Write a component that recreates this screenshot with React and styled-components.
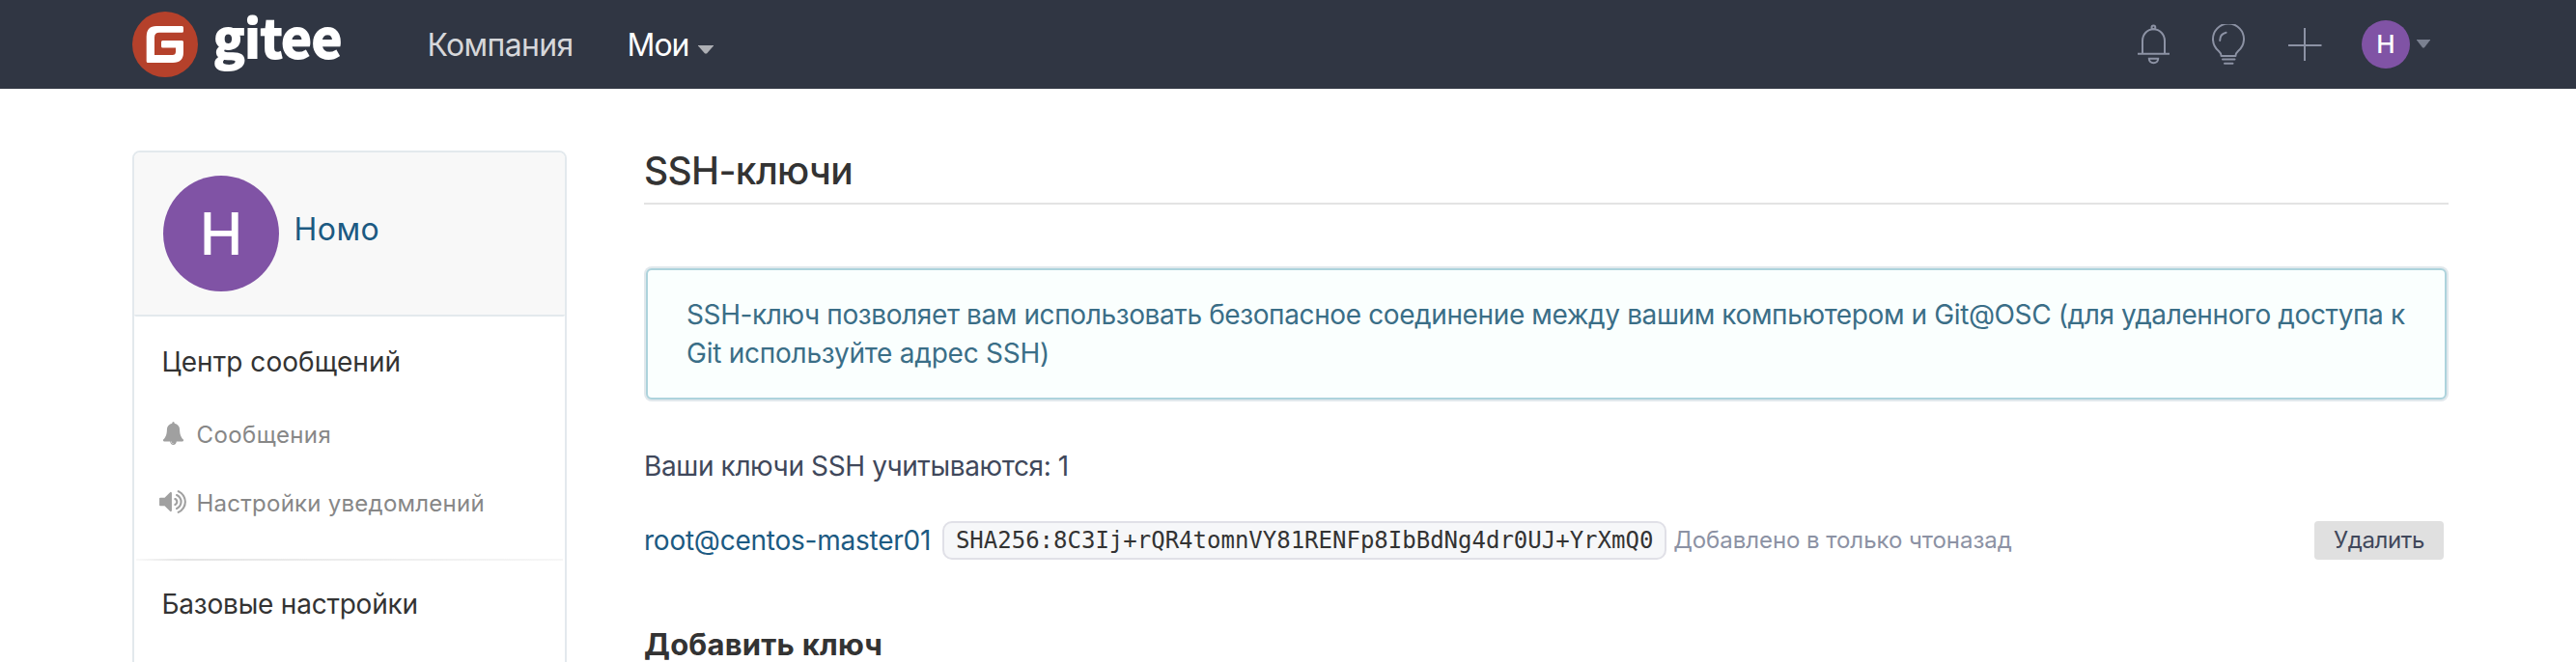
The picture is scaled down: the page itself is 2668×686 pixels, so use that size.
import React from "react";
import styled, { createGlobalStyle } from "styled-components";

const GlobalStyle = createGlobalStyle`
  * { box-sizing: border-box; }
  body {
    margin: 0;
    background: #fff;
    color: #40485b;
    font: 400 28px/40px Inter, "Liberation Sans", sans-serif;
    white-space: nowrap;
  }
  a { text-decoration: none; }
`;

const Page = styled.div`
  height: 686px;
  overflow: hidden;
`;

/* Top bar */

const Header = styled.header`
  display: flex;
  align-items: center;
  height: 92px;
  padding: 0 151px 0 137px;
  background: #303643;
`;

const Wordmark = styled.span`
  align-self: flex-start;
  width: 132px;
  margin: 0 89.5px 0 16px;
  font: 700 54px/73px "Noto Sans CJK SC", "Noto Sans", sans-serif;
  color: #fff;
  -webkit-text-stroke: 2px #fff;
  paint-order: stroke fill;
`;

const Nav = styled.nav`
  display: flex;
  gap: 56px;
  margin-right: auto;
  padding-top: 2px;
`;

const NavLink = styled.a`
  display: flex;
  align-items: center;
  gap: 9.6px;
  line-height: 90px;
  font-size: 32px;
  letter-spacing: ${(p) => (p.$active ? "-1.05px" : "-0.67px")};
  color: ${(p) => (p.$active ? "#fff" : "#d6d7da")};
`;

const Caret = styled.i`
  width: ${(p) => p.$width}px;
  height: 9px;
  background: ${(p) => p.$color};
  clip-path: polygon(0 0, 100% 0, 100% 12%, 56% 100%, 44% 100%, 0 12%);
  margin-top: ${(p) => p.$top}px;
`;

const Tools = styled.div`
  display: flex;
  align-items: center;

  svg {
    display: block;
    fill: none;
    stroke: #8c92a4;
    stroke-width: 2;
  }
`;

const Tool = styled.a`
  margin-right: ${(p) => p.$gap}px;
`;

const Avatar = styled.span`
  display: flex;
  flex: none;
  align-items: center;
  justify-content: center;
  width: ${(p) => p.$size}px;
  height: ${(p) => p.$size}px;
  border-radius: 50%;
  background: #8053a5;
  color: #fff;
  font-size: ${(p) => p.$font}px;
  font-weight: ${(p) => p.$weight};
`;

const UserMenu = styled.div`
  display: flex;
  align-items: center;
  gap: 7px;
`;

/* Body columns */

const Columns = styled.div`
  display: flex;
  gap: 80px;
  padding: 0 132px 0 137px;
`;

const Sidebar = styled.aside`
  width: 450px;
  height: 560px;
  margin-top: 64px;
  border: 2px solid #e3e9ed;
  border-radius: 8px;
`;

const Profile = styled.div`
  display: flex;
  align-items: center;
  gap: 15.5px;
  height: 170px;
  padding: 0 30px;
  background: #f8f8f8;
  border-bottom: 2px solid #e3e9ed;
  border-radius: 6px 6px 2px 2px;
`;

const ProfileName = styled.a`
  margin-bottom: 8px;
  font-size: 32px;
  letter-spacing: 0.46px;
  color: #1c5a82;
`;

const GroupTitle = styled.div`
  padding: ${(p) => p.$top}px 0 0 28.5px;
  letter-spacing: ${(p) => p.$spacing}px;
  color: #333;
`;

const MenuItem = styled.a`
  display: flex;
  align-items: center;
  gap: 9.5px;
  height: 40px;
  margin-top: ${(p) => p.$top}px;
  padding-left: 25px;
  font-size: 24px;
  letter-spacing: ${(p) => p.$spacing}px;
  color: #878787;
`;

const MenuIcon = styled.span`
  display: flex;
  justify-content: center;
  width: 30px;
  margin-bottom: 4px;

  svg {
    display: block;
    fill: #a0a0a0;
  }
`;

const Divider = styled.div`
  height: 2px;
  margin: 37px 2px 0;
  background: linear-gradient(to right, #f9f9f9, #e5e5e5 10%, #f6f6f6);
`;

/* Main column */

const Main = styled.main`
  flex: 1;
  padding-top: 61px;
`;

const Title = styled.h1`
  margin: 0;
  height: 59px;
  border-bottom: 2px solid #e3e3e3;
  font-size: 39px;
  font-weight: 500;
  line-height: 48px;
  letter-spacing: -0.65px;
  color: #333;
`;

const Notice = styled.div`
  margin: 66px 2px 0;
  padding: 26px 40px;
  border: 2px solid #add3dc;
  border-radius: 6px;
  box-shadow: 0 0 0 2px #e1e8ec;
  background: #fafffe;
  color: #3a6e87;
`;

const NoticeLine = styled.div`
  letter-spacing: ${(p) => p.$spacing}px;
`;

const KeyCount = styled.div`
  margin-top: 49px;
  letter-spacing: -0.38px;
`;

const KeyRow = styled.div`
  display: flex;
  align-items: center;
  height: 40px;
  margin-top: 37px;
  padding-right: 5px;
`;

const KeyName = styled.a`
  color: #1c5a82;
  letter-spacing: -0.24px;
`;

const Fingerprint = styled.code`
  height: 40px;
  margin: 0 7px 0 12px;
  padding: 0 11.8px;
  border: 2px solid #e0e0e7;
  border-radius: 10px;
  background: #f6f7f9;
  color: #333;
  font: 24px/36px "DejaVu Sans Mono", monospace;
`;

const AddedAt = styled.span`
  font-size: 24px;
  letter-spacing: -0.05px;
  color: #8c92a4;
`;

const DeleteButton = styled.button`
  width: 134px;
  height: 40px;
  margin-left: auto;
  padding: 0;
  border: 0;
  border-radius: 4px;
  background: #e0e0e0;
  color: #40485b;
  font: 400 24px/40px Inter, sans-serif;
  letter-spacing: -0.36px;
`;

const SectionTitle = styled.h2`
  margin: 68px 0 0;
  font-size: 31px;
  font-weight: 700;
  line-height: 40px;
  letter-spacing: 0.22px;
  color: #333;
`;

const LogoMark = () => (
  <svg width="68" height="68" viewBox="0 0 68 68">
    <circle cx="34" cy="34" r="34" fill="#b5412b" />
    <path
      fill="#fff"
      d="M25 15H51.5q1.5 0 1.5 1.5v3.7q0 1.5-1.5 1.5H28q-5 0-5 5V45h18.5q3.5 0 3.5-3.5v-4H31.5q-1.5 0-1.5-1.5v-4.5q0-1.5 1.5-1.5h20q1.5 0 1.5 1.5V42q0 11-11 11H16.2q-1.5 0-1.5-1.5V26q0-11 10.3-11z"
    />
  </svg>
);

const BellOutline = () => (
  <svg width="34" height="42" viewBox="0 0 34 42">
    <circle cx="16.4" cy="3.3" r="1.9" />
    <path d="M5 30.7V17.5C5 10.5 10 5.3 16.4 5.3S28 10.5 28 17.500v13.200M0 30.800h33M11.800 35.800h9.400c0 2.600-2 4.400-4.700 4.400s-4.700-1.800-4.700-4.400z" />
  </svg>
);

const BulbOutline = () => (
  <svg width="36" height="42" viewBox="0 0 36 42" strokeLinecap="round" strokeLinejoin="round">
    <path d="M10.6 33c0-2.200-1-3.600-2.600-5A16 16 0 1 1 28 28c-1.600 1.400-2.600 2.800-2.600 5z" />
    <path d="M12 36.500h12.500M14 40.700h8.500" />
    <path d="M9.200 17c0-4.500 2.600-7.400 6.400-8.200" />
  </svg>
);

const PlusOutline = () => (
  <svg width="35" height="36" viewBox="0 0 35 36">
    <path d="M17 1v34M0 19h34.500" />
  </svg>
);

const BellSolid = () => (
  <svg width="23" height="24" viewBox="0 0 1792 1792" preserveAspectRatio="none">
    <path d="M912 1696q0-16-16-16-59 0-101.500-42.500t-42.500-101.500q0-16-16-16t-16 16q0 73 51.500 124.500t124.500 51.500q16 0 16-16zm816-288q0 52-38 90t-90 38h-448q0 106-75 181t-181 75-181-75-75-181h-448q-52 0-90-38t-38-90q50-42 91-88t85-119.500 74.500-158.500 50-206 19.500-260q0-152 117-282.500t307-158.500q-8-19-8-39 0-40 28-68t68-28 68 28 28 68q0 20-8 39 190 28 307 158.500t117 282.500q0 139 19.500 260t50 206 74.500 158.500 85 119.500 91 88z" />
  </svg>
);

const VolumeSolid = () => (
  <svg width="30" height="30" viewBox="0 0 1792 1792">
    <path d="M832 352v1088q0 26-19 45t-45 19-45-19l-333-333h-262q-26 0-45-19t-19-45v-384q0-26 19-45t45-19h262l333-333q19-19 45-19t45 19 19 45zm384 544q0 76-42.500 141.500t-112.500 93.500q-10 5-25 5-26 0-45-18.500t-19-45.500q0-21 12-35.500t29-25 34-23 29-36 12-56.500-12-56.500-29-36-34-23-29-25-12-35.500q0-27 19-45.500t45-18.500q15 0 25 5 70 27 112.500 93t42.500 142zm256 0q0 153-85 282.500t-225 188.500q-13 5-25 5-27 0-46-19t-19-45q0-39 39-59 56-29 76-44 74-54 115.500-135.500t41.500-173.500-41.500-173.500-115.500-135.500q-20-15-76-44-39-20-39-59 0-26 19-45t45-19q13 0 26 5 140 59 225 188.500t85 282.500zm256 0q0 230-127 422.500t-338 283.500q-13 5-26 5-26 0-45-19t-19-45q0-36 39-59 7-4 22.500-10.500t22.500-10.500q46-25 82-51 123-91 192-227t69-289-69-289-192-227q-36-26-82-51-7-4-22.500-10.500t-22.500-10.500q-39-23-39-59 0-26 19-45t45-19q13 0 26 5 211 91 338 283.500t127 422.500z" />
  </svg>
);

export default function App() {
  return (
    <Page>
      <GlobalStyle />
      <Header>
        <LogoMark />
        <Wordmark>gitee</Wordmark>
        <Nav>
          <NavLink>Компания</NavLink>
          <NavLink $active>
            Мои
            <Caret $width={16} $color="#adafb4" $top={8} />
          </NavLink>
        </Nav>
        <Tools>
          <Tool $gap={42}><BellOutline /></Tool>
          <Tool $gap={44}><BulbOutline /></Tool>
          <Tool $gap={41}><PlusOutline /></Tool>
          <UserMenu>
            <Avatar $size={50} $font={26} $weight={500}>Н</Avatar>
            <Caret $width={14} $color="#7a8090" $top={-2} />
          </UserMenu>
        </Tools>
      </Header>
      <Columns>
        <Sidebar>
          <Profile>
            <Avatar $size={120} $font={60} $weight={500}>Н</Avatar>
            <ProfileName>Номо</ProfileName>
          </Profile>
          <GroupTitle $top={27} $spacing={0.05}>Центр сообщений</GroupTitle>
          <MenuItem $top={36} $spacing={0.4}>
            <MenuIcon><BellSolid /></MenuIcon>
            Сообщения
          </MenuItem>
          <MenuItem $top={31} $spacing={0.25}>
            <MenuIcon><VolumeSolid /></MenuIcon>
            Настройки уведомлений
          </MenuItem>
          <Divider />
          <GroupTitle $top={25} $spacing={-0.22}>Базовые настройки</GroupTitle>
        </Sidebar>
        <Main>
          <Title>SSH-ключи</Title>
          <Notice>
            <NoticeLine $spacing={-0.387}>
              SSH-ключ позволяет вам использовать безопасное соединение между вашим компьютером и Git@OSC (для удаленного доступа к
            </NoticeLine>
            <NoticeLine $spacing={-0.245}>Git используйте адрес SSH)</NoticeLine>
          </Notice>
          <KeyCount>Ваши ключи SSH учитываются: 1</KeyCount>
          <KeyRow>
            <KeyName>root@centos-master01</KeyName>
            <Fingerprint>SHA256:8C3Ij+rQR4tomnVY81RENFp8IbBdNg4dr0UJ+YrXmQ0</Fingerprint>
            <AddedAt>Добавлено в только чтоназад</AddedAt>
            <DeleteButton>Удалить</DeleteButton>
          </KeyRow>
          <SectionTitle>Добавить ключ</SectionTitle>
        </Main>
      </Columns>
    </Page>
  );
}
